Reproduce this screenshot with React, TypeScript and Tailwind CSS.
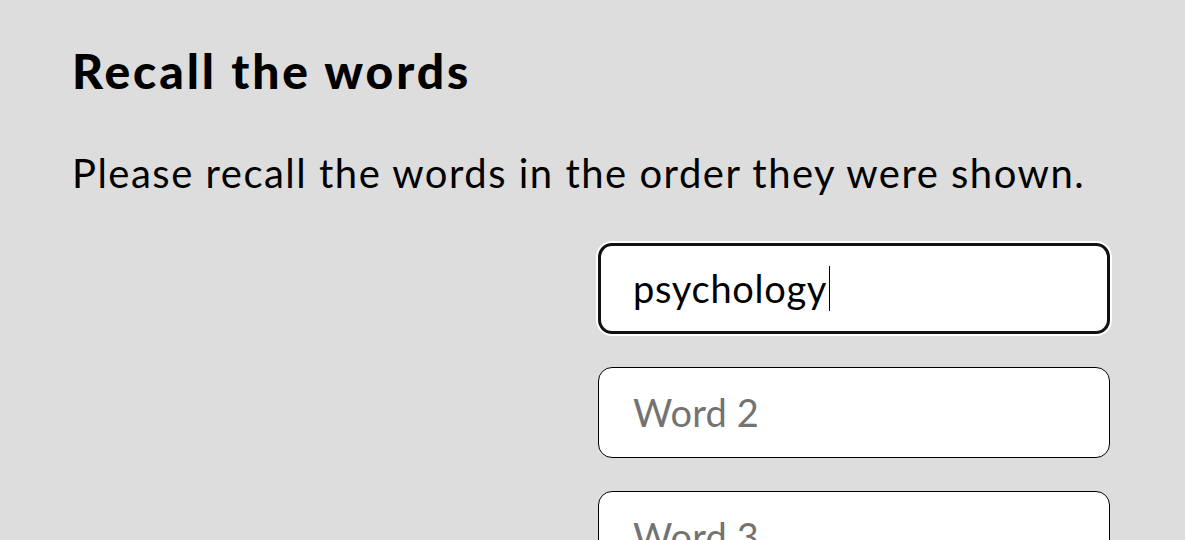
import React from "react";

export default function App() {
  const font = { fontFamily: "Lato, 'Noto Sans', sans-serif" };
  return (
    <div className="h-[540px] w-full bg-[#dddddd] text-black overflow-hidden" style={font}>
      <div className="px-[72px] pt-[43px]">
        <h1 className="text-[48px] leading-[56px] font-black tracking-[2.9px]">Recall the words</h1>
        <p className="mt-[48px] text-[40px] leading-[52px] tracking-[1.5px]">Please recall the words in the order they were shown.</p>
        <div className="mt-[44px] flex flex-col items-end gap-[33px] pr-[3px]">
          <div className="w-[512px] h-[91px] shrink-0 rounded-[14px] bg-white border-[3px] border-[#111111] ring-2 ring-white flex items-center pl-[32px] text-[38px] tracking-[0.7px]">
            <span>psychology</span>
            <span className="inline-block w-px h-[45px] bg-black ml-[2px]"></span>
          </div>
          <div className="w-[512px] h-[91px] shrink-0 rounded-[14px] bg-white border-[1.5px] border-black flex items-center pl-[34px] text-[38px] tracking-[0.2px] text-[#737373]">
            Word 2
          </div>
          <div className="w-[512px] h-[91px] shrink-0 rounded-[14px] bg-white border-[1.5px] border-black flex items-center pl-[34px] text-[38px] tracking-[0.2px] text-[#737373]">
            Word 3
          </div>
        </div>
      </div>
    </div>
  );
}
